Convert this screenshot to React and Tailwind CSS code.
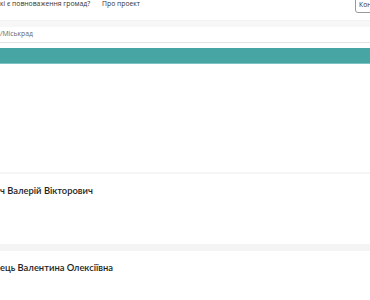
import React from "react";

const people = ["ч Валерій Вікторович", "ець Валентина Олексіївна"];

export default function App() {
  return (
    <div className="w-[370px] h-[300px] overflow-hidden bg-white font-['Open_Sans',sans-serif]">
      {/* верхнє меню */}
      <div className="relative flex items-start h-[20px] text-[6.8px] leading-[8px] text-[#333]">
        <span className="whitespace-nowrap">кі є повноваження громад?</span>
        <span className="ml-[12px] whitespace-nowrap">Про проект</span>
        <div className="absolute left-[355px] -top-[4px] h-[17px] w-[40px] px-[3px] border border-[#999] rounded-[3px] flex items-end pb-[3px] overflow-hidden whitespace-nowrap">
          Контакти
        </div>
      </div>

      <div className="h-[7px] bg-[#f7f7f7] border-t border-[#f2f2f2]" />
      <div className="h-[16px] flex items-center border-b border-[#e4e4e4] text-[6.8px] text-[#666]">
        /Міськрад
      </div>

      <div className="mt-[5px] h-[16px] bg-[#47a6a4] border-b border-[#7cc3c1]" />

      <div className="h-[108px]" />

      {people.map((name, i) => (
        <div key={i}>
          <div className={i === 0 ? "h-[2px] bg-[#f6f6f6]" : "h-[7px] bg-[#f4f4f4]"} />
          <div className="h-[70px] pt-[10px] text-[9.4px] font-semibold text-[#222] font-['Lato',sans-serif] whitespace-nowrap">
            {name}
          </div>
        </div>
      ))}
    </div>
  );
}
